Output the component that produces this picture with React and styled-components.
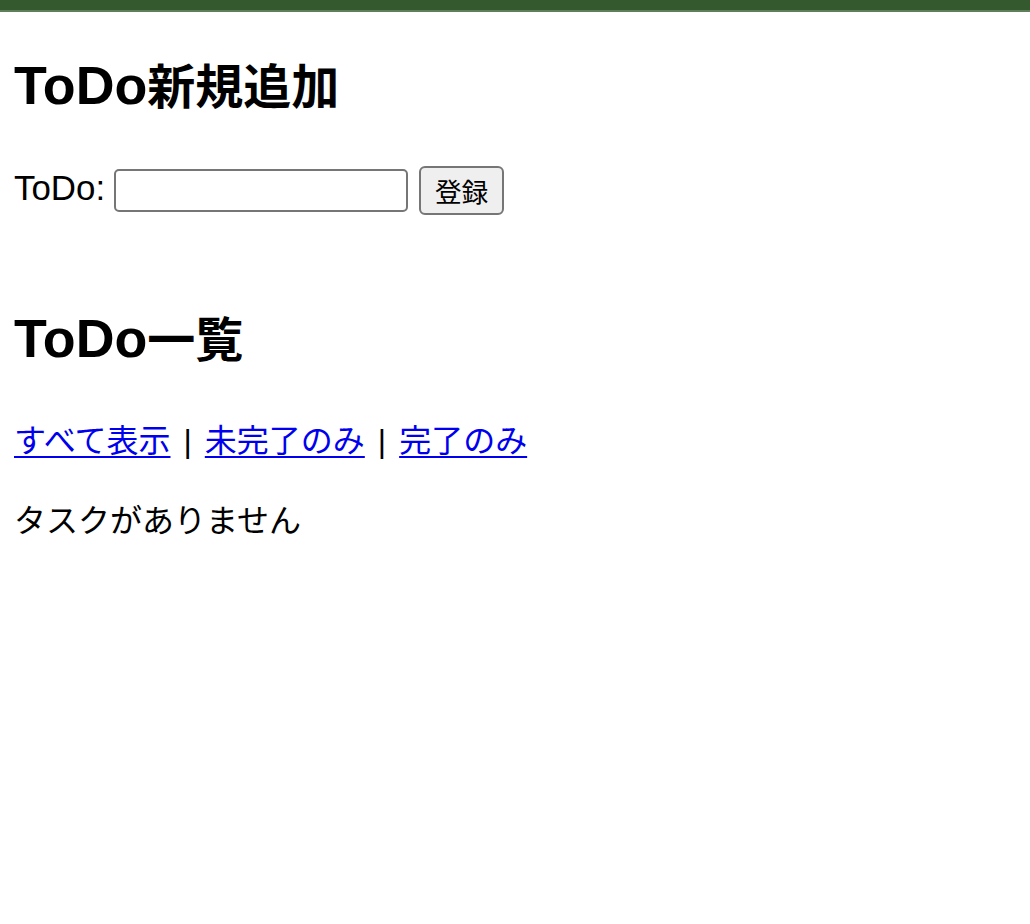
import React, { useState } from "react";
import styled, { createGlobalStyle } from "styled-components";

const GlobalStyle = createGlobalStyle`
  html, body {
    margin: 0;
    padding: 0;
    background: #ffffff;
  }
  body {
    font-family: "Liberation Sans", "Noto Sans CJK JP", sans-serif;
    color: #000000;
  }
`;

const TopBar = styled.div`
  height: 10px;
  background: #34592f;
  border-bottom: 2px solid #5f7e5a;
`;

const Main = styled.main`
  padding: 0 16px 0 14px;
  display: flow-root;
`;

const Heading = styled.h2`
  font-size: 48px;
  line-height: 72px;
  font-weight: 700;
  margin: 40px 0;
`;

const Latin = styled.span`
  font-size: ${(p) => p.$scale || 1.12}em;
  line-height: 1;
`;

const FormRow = styled.form`
  display: flex;
  align-items: center;
  height: 53px;
  margin: 0 0 88px;
`;

const Label = styled.label`
  font-size: 32px;
  line-height: 48px;
  margin-right: 9px;
  position: relative;
  top: -2px;
`;

const TextInput = styled.input`
  box-sizing: border-box;
  width: 294px;
  height: 43px;
  border: 2px solid #767676;
  border-radius: 5px;
  font-size: 26.67px;
  font-family: "Liberation Sans", "Noto Sans CJK JP", sans-serif;
  padding: 2px 4px;
  margin-right: 11px;
  background: #ffffff;
  outline: none;
`;

const SubmitButton = styled.button`
  box-sizing: border-box;
  width: 85px;
  height: 49px;
  border: 2px solid #767676;
  border-radius: 6px;
  background: #efefef;
  font-size: 26.67px;
  font-family: "Liberation Sans", "Noto Sans CJK JP", sans-serif;
  color: #000000;
  padding: 0;
  cursor: pointer;
`;

const Paragraph = styled.p`
  font-size: 32px;
  line-height: 48px;
  margin: 32px 0;
`;

const FilterLink = styled.a`
  color: #0000ee;
  text-decoration: underline;
  text-underline-offset: 4px;
  text-decoration-thickness: 2px;
  cursor: pointer;
`;

const Separator = styled.span`
  margin: 0 13px;
`;

export default function App() {
  const [text, setText] = useState("");
  const filters = ["すべて表示", "未完了のみ", "完了のみ"];

  return (
    <>
      <GlobalStyle />
      <TopBar />
      <Main>
        <Heading>
          <Latin>ToDo</Latin>新規追加
        </Heading>
        <FormRow onSubmit={(e) => e.preventDefault()}>
          <Label htmlFor="todo">
            <Latin $scale={1.09}>ToDo:</Latin>
          </Label>
          <TextInput
            id="todo"
            type="text"
            value={text}
            onChange={(e) => setText(e.target.value)}
          />
          <SubmitButton type="submit">登録</SubmitButton>
        </FormRow>

        <Heading>
          <Latin>ToDo</Latin>一覧
        </Heading>
        <Paragraph>
          {filters.map((f, i) => (
            <React.Fragment key={f}>
              {i > 0 && <Separator>|</Separator>}
              <FilterLink href="#" onClick={(e) => e.preventDefault()}>
                {f}
              </FilterLink>
            </React.Fragment>
          ))}
        </Paragraph>
        <Paragraph>タスクがありません</Paragraph>
      </Main>
    </>
  );
}
